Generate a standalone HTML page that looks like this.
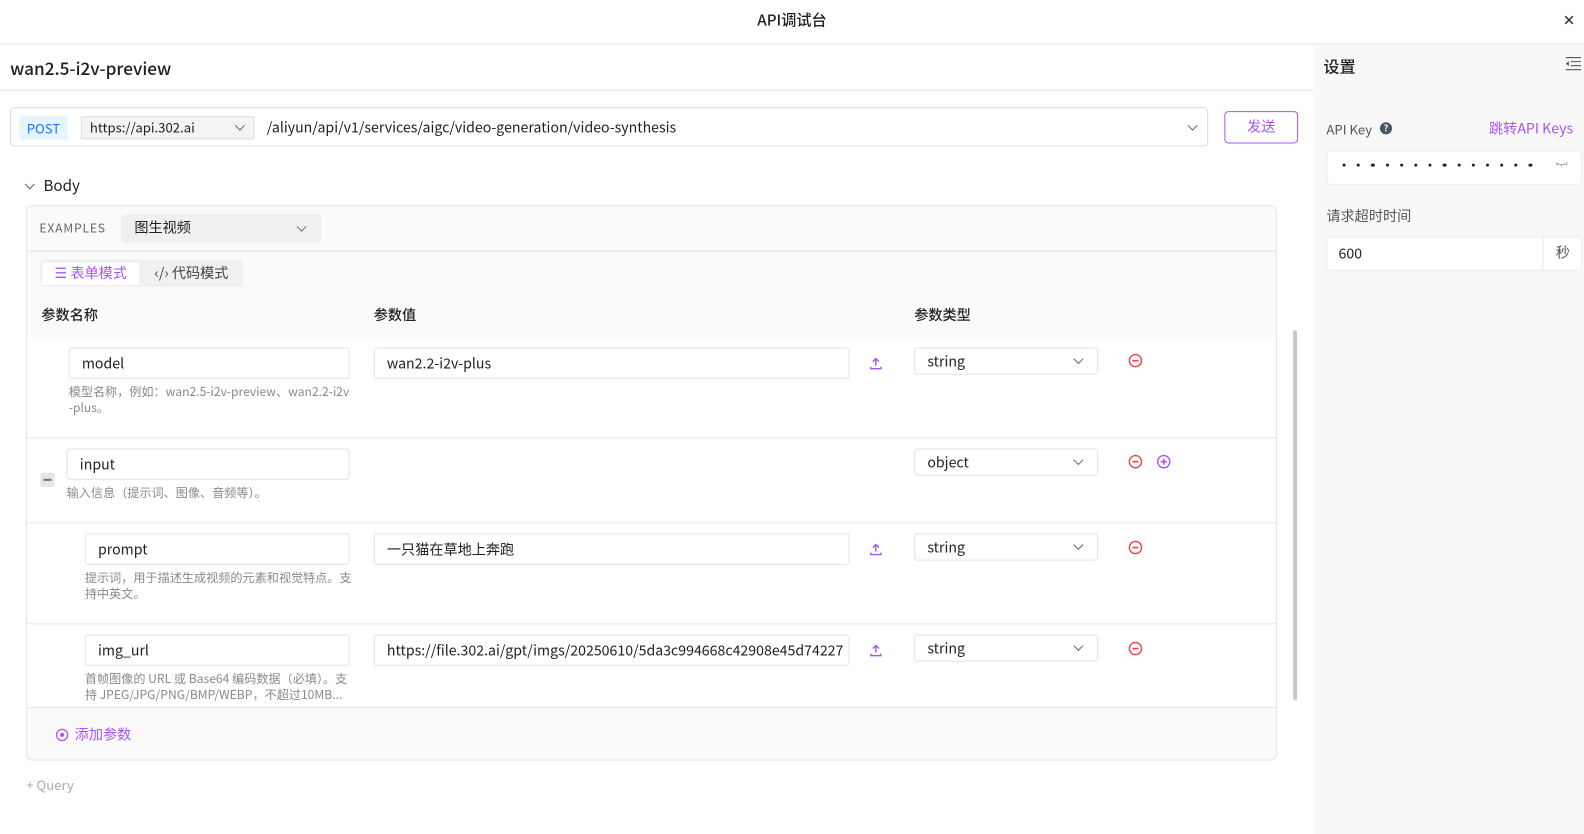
<!DOCTYPE html>
<html><head><meta charset="utf-8"><style>
*{box-sizing:border-box;margin:0;padding:0}
html,body{width:1584px;height:834px;overflow:hidden;background:#fff}
body{font-family:"Noto Sans CJK SC","Liberation Sans",sans-serif;color:#1f1f1f}
#w{position:absolute;left:0;top:0;width:1568px;height:826px;transform:scale(1.0102);transform-origin:0 0}
.a{position:absolute}
.t{position:absolute;white-space:nowrap;line-height:1}
.inp{position:absolute;background:#fff;border:1px solid #e2e2e6;border-radius:3px;font-size:14px;padding-left:12px;display:flex;align-items:center;white-space:nowrap;overflow:hidden}
.sel{position:absolute;background:#fff;border:1px solid #e2e2e6;border-radius:3px;font-size:14px;padding-left:12px;display:flex;align-items:center}
.chev{position:absolute;width:7px;height:7px;border-right:1.3px solid #666;border-bottom:1.3px solid #666;transform:rotate(45deg)}
.desc{position:absolute;font-size:12px;color:#8a8a8a;line-height:16px}
.hl{position:absolute;height:1px;background:#e6e6e6}
.dots{position:absolute;left:1329px;top:162px;display:flex;gap:11px}
.dots i{display:block;width:3.2px;height:3.2px;border-radius:50%;background:#222}
</style></head><body><div id="w">
<div class="t" style="left:0;width:1568px;text-align:center;top:12px;font-size:15px;font-weight:500">API调试台</div>
<div class="t" style="left:1547px;top:12px;font-size:15px;color:#333">✕</div>
<div class="hl" style="left:0;top:43px;width:1568px;background:#e4e4e8"></div>
<div class="a" style="left:1300px;top:44px;width:268px;height:782px;background:#f8f8f9"></div>
<div class="t" style="left:1310px;top:57px;font-size:16px;font-weight:500">设置</div>
<svg class="a" style="left:1548px;top:56px" width="18" height="16" viewBox="0 0 18 16"><path d="M2 1h15M7 5h10M7 9h10M2 13h15" stroke="#555" stroke-width="1.1" fill="none"/><path d="M5 4.5L2 7l3 2.5z" fill="#555"/></svg>
<div class="t" style="left:1313px;top:121px;font-size:13px;color:#555">API Key</div>
<div class="a" style="left:1366px;top:121px;width:12px;height:12px;border-radius:50%;background:#4b5563;color:#fff;font-size:9px;text-align:center;line-height:12px;font-weight:700">?</div>
<div class="t" style="left:1474px;top:120px;font-size:14px;color:#a855f7">跳转API Keys</div>
<div class="a" style="left:1313px;top:149px;width:253px;height:34px;background:#fff;border:1px solid #ececef;border-radius:4px"></div>
<div class="dots"><i></i><i></i><i></i><i></i><i></i><i></i><i></i><i></i><i></i><i></i><i></i><i></i><i></i><i></i></div>
<svg class="a" style="left:1539px;top:160px" width="14" height="6" viewBox="0 0 14 6"><path d="M1 1q6 4 12 0M3 2l-1 2M7 3v2M11 2l1 2" stroke="#999" stroke-width=".9" fill="none"/></svg>
<div class="t" style="left:1313px;top:207px;font-size:14px;color:#555">请求超时时间</div>
<div class="a" style="left:1313px;top:234px;width:253px;height:34px;background:#fff;border:1px solid #ececef;border-radius:4px"></div>
<div class="a" style="left:1527px;top:234px;width:1px;height:34px;background:#ececef"></div>
<div class="t" style="left:1325px;top:244px;font-size:14px">600</div>
<div class="t" style="left:1540px;top:243px;font-size:14px;color:#555">秒</div>
<div class="t" style="left:10px;top:58px;font-size:17px;font-weight:500">wan2.5-i2v-preview</div>
<div class="hl" style="left:0;top:89px;width:1300px;background:#e4e4e8"></div>
<div class="a" style="left:10px;top:106px;width:1186px;height:39px;border:1px solid #dcdce0;border-radius:4px"></div>
<div class="a" style="left:19px;top:115px;width:48px;height:23px;background:#e6f4ff;color:#1677ff;font-size:13px;text-align:center;line-height:23px;border-radius:2px">POST</div>
<div class="a" style="left:80px;top:115px;width:172px;height:23px;background:#f3f4f6;border:1px solid #dedee3;border-radius:2px"></div>
<div class="t" style="left:89px;top:119px;font-size:13px">https://api.302.ai</div>
<div class="chev" style="left:234px;top:121px"></div>
<div class="t" style="left:264px;top:119px;font-size:14px">/aliyun/api/v1/services/aigc/video-generation/video-synthesis</div>
<div class="chev" style="left:1177px;top:121px"></div>
<div class="a" style="left:1212px;top:110px;width:73px;height:32px;border:1.5px solid #a855f7;border-radius:4px;color:#a855f7;font-size:14px;text-align:center;line-height:29px">发送</div>
<div class="chev" style="left:26px;top:179px"></div>
<div class="t" style="left:43px;top:176px;font-size:15px">Body</div>
<div class="a" style="left:26px;top:203px;width:1238px;height:550px;background:#fafafa;border:1px solid #e4e4e8;border-radius:6px"></div>
<div class="t" style="left:39px;top:220px;font-size:12px;color:#666;letter-spacing:.8px">EXAMPLES</div>
<div class="a" style="left:120px;top:212px;width:198px;height:28px;background:#f0f0f2;border-radius:3px"></div>
<div class="t" style="left:133px;top:218px;font-size:14px">图生视频</div>
<div class="chev" style="left:295px;top:221px"></div>
<div class="hl" style="left:27px;top:248px;width:1236px;background:#e4e4e8"></div>
<div class="a" style="left:40px;top:257px;width:200px;height:27px;background:#f0f0f2;border-radius:3px"></div>
<div class="a" style="left:42px;top:260px;width:96px;height:22px;background:#fff;border-radius:2px"></div>
<div class="t" style="left:54px;top:263px;font-size:14px;color:#a855f7">☰ 表单模式</div>
<div class="t" style="left:153px;top:263px;font-size:14px;color:#444">‹/› 代码模式</div>
<div class="t" style="left:41px;top:305px;font-size:14px;font-weight:500">参数名称</div>
<div class="t" style="left:370px;top:305px;font-size:14px;font-weight:500">参数值</div>
<div class="t" style="left:905px;top:305px;font-size:14px;font-weight:500">参数类型</div>
<div class="a" style="left:27px;top:334px;width:1236px;height:366px;background:#fff"></div>
<div class="hl" style="left:27px;top:433px;width:1236px"></div>
<div class="hl" style="left:27px;top:517px;width:1236px"></div>
<div class="hl" style="left:27px;top:617px;width:1236px"></div>
<div class="hl" style="left:27px;top:700px;width:1236px"></div>
<div class="a" style="left:1280px;top:327px;width:4px;height:366px;background:#c8c8cc;border-radius:2px"></div>
<div class="inp" style="left:68px;top:344px;width:278px;height:31px">model</div>
<div class="desc" style="left:68px;top:380px;width:280px">模型名称，例如：wan2.5-i2v-preview、wan2.2-i2v<br>-plus。</div>
<div class="inp" style="left:370px;top:344px;width:471px;height:31px">wan2.2-i2v-plus</div>
<div class="a" style="left:40px;top:468px;width:14px;height:14px;background:#e5e5e8;border-radius:2px"></div>
<div class="a" style="left:43px;top:474px;width:8px;height:2px;background:#777"></div>
<div class="inp" style="left:66px;top:444px;width:280px;height:31px">input</div>
<div class="desc" style="left:66px;top:480px">输入信息（提示词、图像、音频等）。</div>
<div class="inp" style="left:84px;top:528px;width:262px;height:31px">prompt</div>
<div class="desc" style="left:84px;top:564px;width:266px">提示词，用于描述生成视频的元素和视觉特点。支持中英文。</div>
<div class="inp" style="left:370px;top:528px;width:471px;height:31px">一只猫在草地上奔跑</div>
<div class="inp" style="left:84px;top:628px;width:262px;height:31px">img_url</div>
<div class="desc" style="left:84px;top:664px;width:266px">首帧图像的 URL 或 Base64 编码数据（必填）。支持 JPEG/JPG/PNG/BMP/WEBP，不超过10MB...</div>
<div class="inp" style="left:370px;top:628px;width:471px;height:31px">https://file.302.ai/gpt/imgs/20250610/5da3c994668c42908e45d74227</div>
<div class="sel" style="left:905px;top:344px;width:182px;height:27px">string</div><div class="chev" style="left:1064px;top:352px"></div>
<div class="sel" style="left:905px;top:444px;width:182px;height:27px">object</div><div class="chev" style="left:1064px;top:452px"></div>
<div class="sel" style="left:905px;top:528px;width:182px;height:27px">string</div><div class="chev" style="left:1064px;top:536px"></div>
<div class="sel" style="left:905px;top:628px;width:182px;height:27px">string</div><div class="chev" style="left:1064px;top:636px"></div>
<svg width="0" height="0" style="position:absolute"><defs>
<g id="up"><path d="M6 9V2M3 5l3-3 3 3M1 10v2h10v-2" stroke="#a855f7" stroke-width="1.4" fill="none"/></g>
<g id="mi"><circle cx="7" cy="7" r="6" stroke="#ef4444" stroke-width="1.4" fill="none"/><path d="M4 7h6" stroke="#ef4444" stroke-width="1.6"/></g>
</defs></svg>
<svg class="a" style="left:861px;top:353px" width="12" height="13"><use href="#up"/></svg>
<svg class="a" style="left:861px;top:537px" width="12" height="13"><use href="#up"/></svg>
<svg class="a" style="left:861px;top:637px" width="12" height="13"><use href="#up"/></svg>
<svg class="a" style="left:1117px;top:350px" width="14" height="14"><use href="#mi"/></svg>
<svg class="a" style="left:1117px;top:450px" width="14" height="14"><use href="#mi"/></svg>
<svg class="a" style="left:1117px;top:535px" width="14" height="14"><use href="#mi"/></svg>
<svg class="a" style="left:1117px;top:635px" width="14" height="14"><use href="#mi"/></svg>
<svg class="a" style="left:1145px;top:450px" width="14" height="14"><circle cx="7" cy="7" r="6" stroke="#a855f7" stroke-width="1.4" fill="none"/><path d="M4 7h6M7 4v6" stroke="#a855f7" stroke-width="1.6"/></svg>
<svg class="a" style="left:55px;top:721px" width="13" height="13"><circle cx="6.5" cy="6.5" r="5.5" stroke="#a855f7" stroke-width="1.3" fill="none"/><circle cx="6.5" cy="6.5" r="2" fill="#a855f7"/></svg>
<div class="t" style="left:74px;top:720px;font-size:14px;color:#a855f7">添加参数</div>
<div class="t" style="left:26px;top:770px;font-size:13px;color:#aaa">+ Query</div>
</div></body></html>
